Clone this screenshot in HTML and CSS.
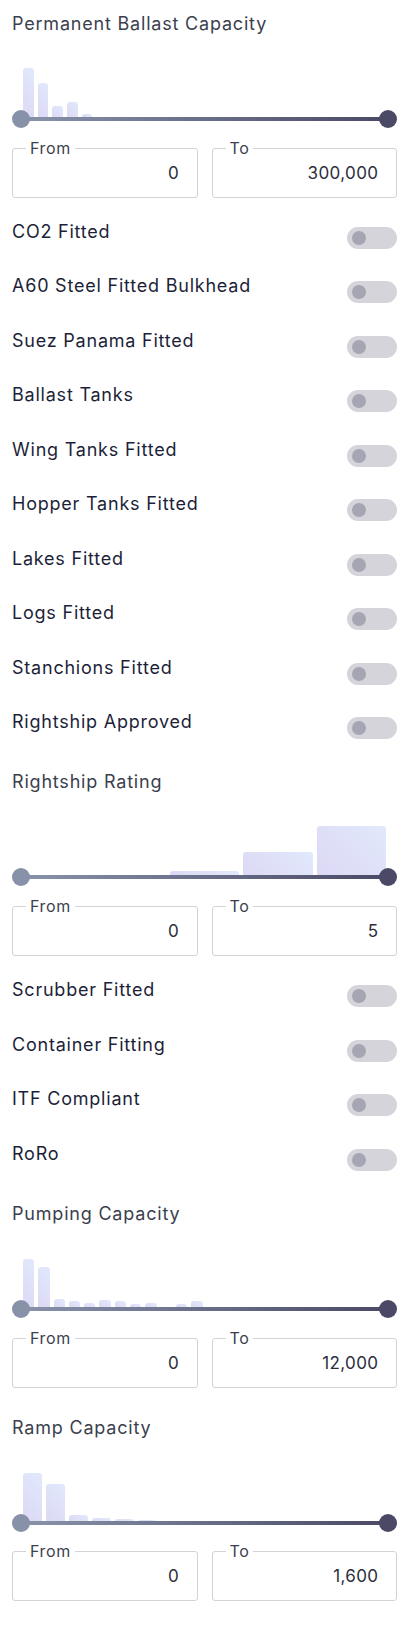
FILE: index.html
```html
<!DOCTYPE html>
<html lang="en">
<head>
<meta charset="utf-8">
<title>Filters</title>
<link rel="stylesheet" href="styles.css">
</head>
<body>
<div class="panel">

  <section class="range-section">
    <h3 class="section-title">Permanent Ballast Capacity</h3>
    <div class="hist">
      <div class="bin"><div class="bar" style="height:51px"></div></div>
      <div class="bin"><div class="bar" style="height:36px"></div></div>
      <div class="bin"><div class="bar" style="height:13px"></div></div>
      <div class="bin"><div class="bar" style="height:17px"></div></div>
      <div class="bin"><div class="bar" style="height:5px"></div></div>
      <div class="bin"></div><div class="bin"></div><div class="bin"></div><div class="bin"></div><div class="bin"></div>
      <div class="bin"></div><div class="bin"></div><div class="bin"></div><div class="bin"></div><div class="bin"></div>
      <div class="bin"></div><div class="bin"></div><div class="bin"></div><div class="bin"></div><div class="bin"></div>
      <div class="bin"></div><div class="bin"></div><div class="bin"></div><div class="bin"></div><div class="bin"></div>
    </div>
    <div class="slider"><div class="track"></div><span class="thumb thumb-min"></span><span class="thumb thumb-max"></span></div>
    <div class="inputs">
      <div class="field"><span class="legend">From</span><span class="value">0</span></div>
      <div class="field"><span class="legend">To</span><span class="value">300,000</span></div>
    </div>
  </section>

  <div class="toggles">
    <div class="toggle-row"><span class="label">CO2 Fitted</span><span class="switch"><span class="knob"></span></span></div>
    <div class="toggle-row"><span class="label">A60 Steel Fitted Bulkhead</span><span class="switch"><span class="knob"></span></span></div>
    <div class="toggle-row"><span class="label">Suez Panama Fitted</span><span class="switch"><span class="knob"></span></span></div>
    <div class="toggle-row"><span class="label">Ballast Tanks</span><span class="switch"><span class="knob"></span></span></div>
    <div class="toggle-row"><span class="label">Wing Tanks Fitted</span><span class="switch"><span class="knob"></span></span></div>
    <div class="toggle-row"><span class="label">Hopper Tanks Fitted</span><span class="switch"><span class="knob"></span></span></div>
    <div class="toggle-row"><span class="label">Lakes Fitted</span><span class="switch"><span class="knob"></span></span></div>
    <div class="toggle-row"><span class="label">Logs Fitted</span><span class="switch"><span class="knob"></span></span></div>
    <div class="toggle-row"><span class="label">Stanchions Fitted</span><span class="switch"><span class="knob"></span></span></div>
    <div class="toggle-row"><span class="label">Rightship Approved</span><span class="switch"><span class="knob"></span></span></div>
  </div>

  <section class="range-section after-toggles">
    <h3 class="section-title">Rightship Rating</h3>
    <div class="hist">
      <div class="bin"></div>
      <div class="bin"></div>
      <div class="bin"><div class="bar" style="height:6px"></div></div>
      <div class="bin"><div class="bar" style="height:25px"></div></div>
      <div class="bin"><div class="bar" style="height:51px"></div></div>
    </div>
    <div class="slider"><div class="track"></div><span class="thumb thumb-min"></span><span class="thumb thumb-max"></span></div>
    <div class="inputs">
      <div class="field"><span class="legend">From</span><span class="value">0</span></div>
      <div class="field"><span class="legend">To</span><span class="value">5</span></div>
    </div>
  </section>

  <div class="toggles">
    <div class="toggle-row"><span class="label">Scrubber Fitted</span><span class="switch"><span class="knob"></span></span></div>
    <div class="toggle-row"><span class="label">Container Fitting</span><span class="switch"><span class="knob"></span></span></div>
    <div class="toggle-row"><span class="label">ITF Compliant</span><span class="switch"><span class="knob"></span></span></div>
    <div class="toggle-row"><span class="label">RoRo</span><span class="switch"><span class="knob"></span></span></div>
  </div>

  <section class="range-section after-toggles">
    <h3 class="section-title">Pumping Capacity</h3>
    <div class="hist">
      <div class="bin"><div class="bar" style="height:50px"></div></div>
      <div class="bin"><div class="bar" style="height:42px"></div></div>
      <div class="bin"><div class="bar" style="height:10px"></div></div>
      <div class="bin"><div class="bar" style="height:8px"></div></div>
      <div class="bin"><div class="bar" style="height:6px"></div></div>
      <div class="bin"><div class="bar" style="height:9px"></div></div>
      <div class="bin"><div class="bar" style="height:8px"></div></div>
      <div class="bin"><div class="bar" style="height:5px"></div></div>
      <div class="bin"><div class="bar" style="height:6px"></div></div>
      <div class="bin"></div>
      <div class="bin"><div class="bar" style="height:5px"></div></div>
      <div class="bin"><div class="bar" style="height:8px"></div></div>
      <div class="bin"></div><div class="bin"></div><div class="bin"></div><div class="bin"></div>
      <div class="bin"></div><div class="bin"></div><div class="bin"></div><div class="bin"></div>
      <div class="bin"></div><div class="bin"></div><div class="bin"></div><div class="bin"></div>
    </div>
    <div class="slider"><div class="track"></div><span class="thumb thumb-min"></span><span class="thumb thumb-max"></span></div>
    <div class="inputs">
      <div class="field"><span class="legend">From</span><span class="value">0</span></div>
      <div class="field"><span class="legend">To</span><span class="value">12,000</span></div>
    </div>
  </section>

  <section class="range-section after-range">
    <h3 class="section-title">Ramp Capacity</h3>
    <div class="hist">
      <div class="bin"><div class="bar" style="height:50px"></div></div>
      <div class="bin"><div class="bar" style="height:39px"></div></div>
      <div class="bin"><div class="bar" style="height:8px"></div></div>
      <div class="bin"><div class="bar" style="height:5px"></div></div>
      <div class="bin"><div class="bar" style="height:4px"></div></div>
      <div class="bin"><div class="bar" style="height:3px"></div></div>
      <div class="bin"></div><div class="bin"></div><div class="bin"></div><div class="bin"></div><div class="bin"></div>
      <div class="bin"></div><div class="bin"></div><div class="bin"></div><div class="bin"></div><div class="bin"></div>
    </div>
    <div class="slider"><div class="track"></div><span class="thumb thumb-min"></span><span class="thumb thumb-max"></span></div>
    <div class="inputs">
      <div class="field"><span class="legend">From</span><span class="value">0</span></div>
      <div class="field"><span class="legend">To</span><span class="value">1,600</span></div>
    </div>
  </section>

</div>
</body>
</html>
```

FILE: styles.css
```css
* { box-sizing: border-box; }

html, body {
  margin: 0;
  padding: 0;
  background: #ffffff;
}

body {
  font-family: Inter, "Noto Sans", "Liberation Sans", sans-serif;
  color: #1f2038;
}

.panel {
  padding: 12px 7px 0 12px;
  display: flex;
  flex-direction: column;
}

.section-title {
  margin: 0;
  font-size: 18px;
  letter-spacing: 0.8px;
  font-weight: 400;
  line-height: 24px;
  height: 24px;
  color: #3c3f4e;
}

.after-toggles { margin-top: 6px; }
.after-range { margin-top: 28px; }

.hist {
  height: 83px;
  margin: 0 9px;
  display: flex;
  align-items: flex-end;
}

.bin {
  flex: 1 1 0;
  height: 100%;
  display: flex;
  align-items: flex-end;
  padding: 0 2px;
}

.bar {
  width: 100%;
  border-radius: 3px 3px 0 0;
  background: linear-gradient(45deg, #dcd8f4 0%, #e1e9fc 100%);
}

.slider {
  position: relative;
  height: 18px;
  margin-top: -9px;
  padding: 7px 9px 0;
}

.track {
  height: 4px;
  background: linear-gradient(90deg, #8893aa 0%, #4a4966 100%);
}

.thumb {
  position: absolute;
  top: 0;
  width: 18px;
  height: 18px;
  border-radius: 50%;
}

.thumb-min { left: 0; background: #8791a8; }
.thumb-max { right: 0; background: #4a4966; }

.inputs {
  margin-top: 19.5px;
  display: grid;
  grid-template-columns: 1fr 1fr;
  column-gap: 14px;
}

.field {
  position: relative;
  height: 50px;
  border: 1.5px solid #d2d2d8;
  border-radius: 3px;
  display: flex;
  align-items: center;
  justify-content: flex-end;
  padding: 0 17.5px 0 12px;
}

.legend {
  position: absolute;
  top: -11px;
  left: 13px;
  padding: 0 4px;
  background: #ffffff;
  font-size: 16px;
  letter-spacing: 0.6px;
  line-height: 20px;
  color: #3c3f4e;
}

.value {
  font-size: 17px;
  letter-spacing: 0.4px;
  line-height: 24px;
  color: #2b2e3c;
}

.toggles {
  margin-top: 22.5px;
  display: flex;
  flex-direction: column;
}

.toggle-row {
  height: 54.45px;
  display: flex;
  justify-content: space-between;
  align-items: flex-start;
}

.label {
  font-size: 18px;
  letter-spacing: 0.78px;
  line-height: 24px;
  color: #1d1f39;
}

.switch {
  margin-top: 7px;
  width: 50px;
  height: 22px;
  border-radius: 11px;
  background: #d5d4da;
  display: flex;
  align-items: center;
  padding-left: 5px;
}

.knob {
  width: 14px;
  height: 14px;
  border-radius: 50%;
  background: #a6a5b3;
}
```
